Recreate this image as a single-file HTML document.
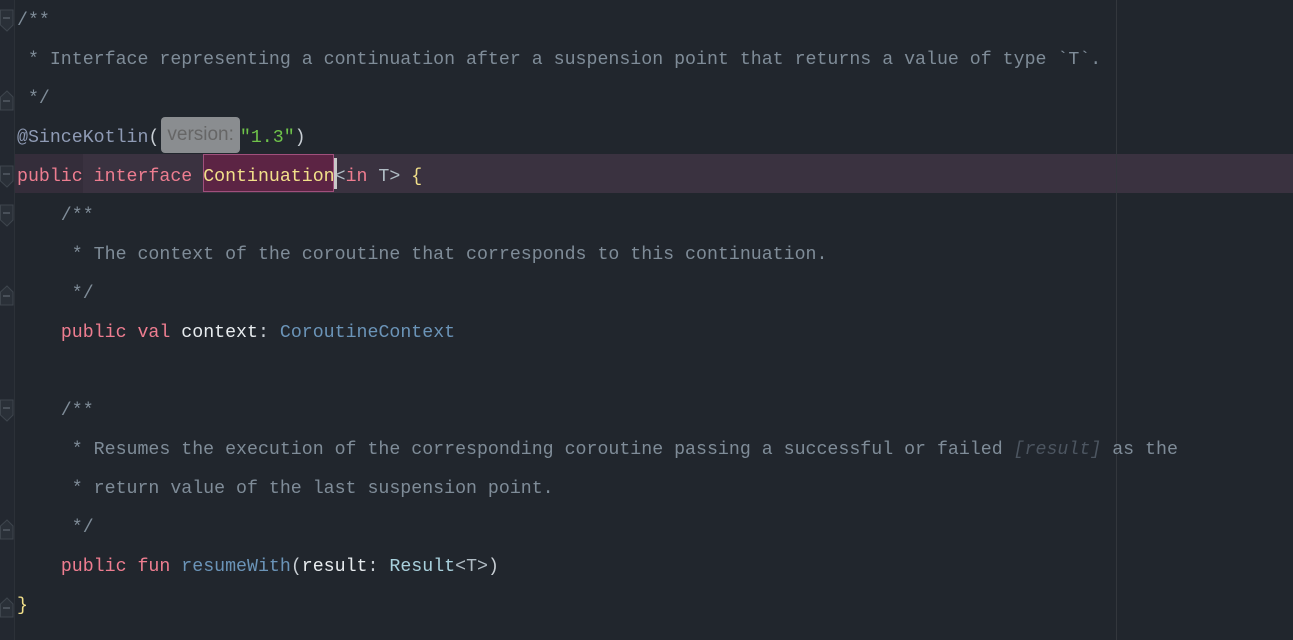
<!DOCTYPE html>
<html><head><meta charset="utf-8"><style>
html,body{margin:0;padding:0;width:1293px;height:640px;overflow:hidden;background:#21262d;}
.code{position:absolute;left:17px;top:2px;font-family:"Liberation Mono",monospace;font-size:18.25px;line-height:39px;color:#c8ced4;}
.l{height:39px;white-space:pre;}
.c{color:#7f8c98}
.k{color:#ee7d90}
.y{color:#f2e08a}
.t{color:#6b94b8}
.r{color:#a8d0dc}
.s{color:#6fc34a}
.a{color:#8f9bb5}
.g{color:#b0bcc4}
.i{color:#4c5560;font-style:italic}
.hint{display:inline-block;background:#8a8d90;color:#666;border-radius:4px;font-family:"Liberation Sans",sans-serif;font-size:19px;line-height:36px;height:36px;padding:0 6px;vertical-align:middle;margin-top:-4px;margin-left:2px}
.gut{position:absolute;left:0;top:0;width:14px;height:640px;background:#232830;border-right:1px solid #2c3138}
</style></head><body>
<div style="position:absolute;left:0;top:154px;width:1293px;height:39px;background:#342d3a"></div>
<div style="position:absolute;left:83px;top:154px;width:1210px;height:39px;background:#3a3240"></div>
<div style="position:absolute;left:203px;top:154px;width:131px;height:38px;background:#5c2444;border:1px solid #a0507c;box-sizing:border-box"></div>
<div style="position:absolute;left:1116px;top:0;width:1px;height:640px;background:#33373d"></div>
<div class="gut"></div>
<svg style="position:absolute;left:0;top:0" width="16" height="640">
<g fill="#2a3038" stroke="#3e454d" stroke-width="1">
<path d="M0.5 10 H13 V25 L7 31 L0.5 25 Z"/>
<path d="M0.5 97 L7 91 L13 97 V110 H0.5 Z"/>
<path d="M0.5 166 H13 V181 L7 187 L0.5 181 Z"/>
<path d="M0.5 205 H13 V220 L7 226 L0.5 220 Z"/>
<path d="M0.5 292 L7 286 L13 292 V305 H0.5 Z"/>
<path d="M0.5 400 H13 V415 L7 421 L0.5 415 Z"/>
<path d="M0.5 526 L7 520 L13 526 V539 H0.5 Z"/>
<path d="M0.5 604 L7 598 L13 604 V617 H0.5 Z"/>
</g>
<g stroke="#68717a"><path d="M3 18H10M3 101H10M3 174H10M3 213H10M3 296H10M3 408H10M3 530H10M3 608H10"/></g>
</svg>
<div class="code">
<div class="l c">/**</div>
<div class="l c"> * Interface representing a continuation after a suspension point that returns a value of type `T`.</div>
<div class="l c"> */</div>
<div class="l"><span class="a">@SinceKotlin</span>(<span class="hint">version:</span><span class="s">"1.3"</span>)</div>
<div class="l"><span class="k">public interface </span><span class="y">Continuation</span><span class="g">&lt;</span><span class="k">in</span> <span class="g">T&gt;</span> <span class="y">{</span></div>
<div class="l c">    /**</div>
<div class="l c">     * The context of the coroutine that corresponds to this continuation.</div>
<div class="l c">     */</div>
<div class="l">    <span class="k">public val</span> <span style="color:#e8ecef">context</span>: <span class="t">CoroutineContext</span></div>
<div class="l"> </div>
<div class="l c">    /**</div>
<div class="l c">     * Resumes the execution of the corresponding coroutine passing a successful or failed <span class="i">[result]</span> as the</div>
<div class="l c">     * return value of the last suspension point.</div>
<div class="l c">     */</div>
<div class="l">    <span class="k">public fun</span> <span class="t">resumeWith</span>(<span style="color:#e8ecef">result</span>: <span class="r">Result</span><span class="g">&lt;T&gt;</span>)</div>
<div class="l y">}</div>
</div>
<div style="position:absolute;left:334px;top:158px;width:3px;height:31px;background:#c8c8c8"></div>
</body></html>
